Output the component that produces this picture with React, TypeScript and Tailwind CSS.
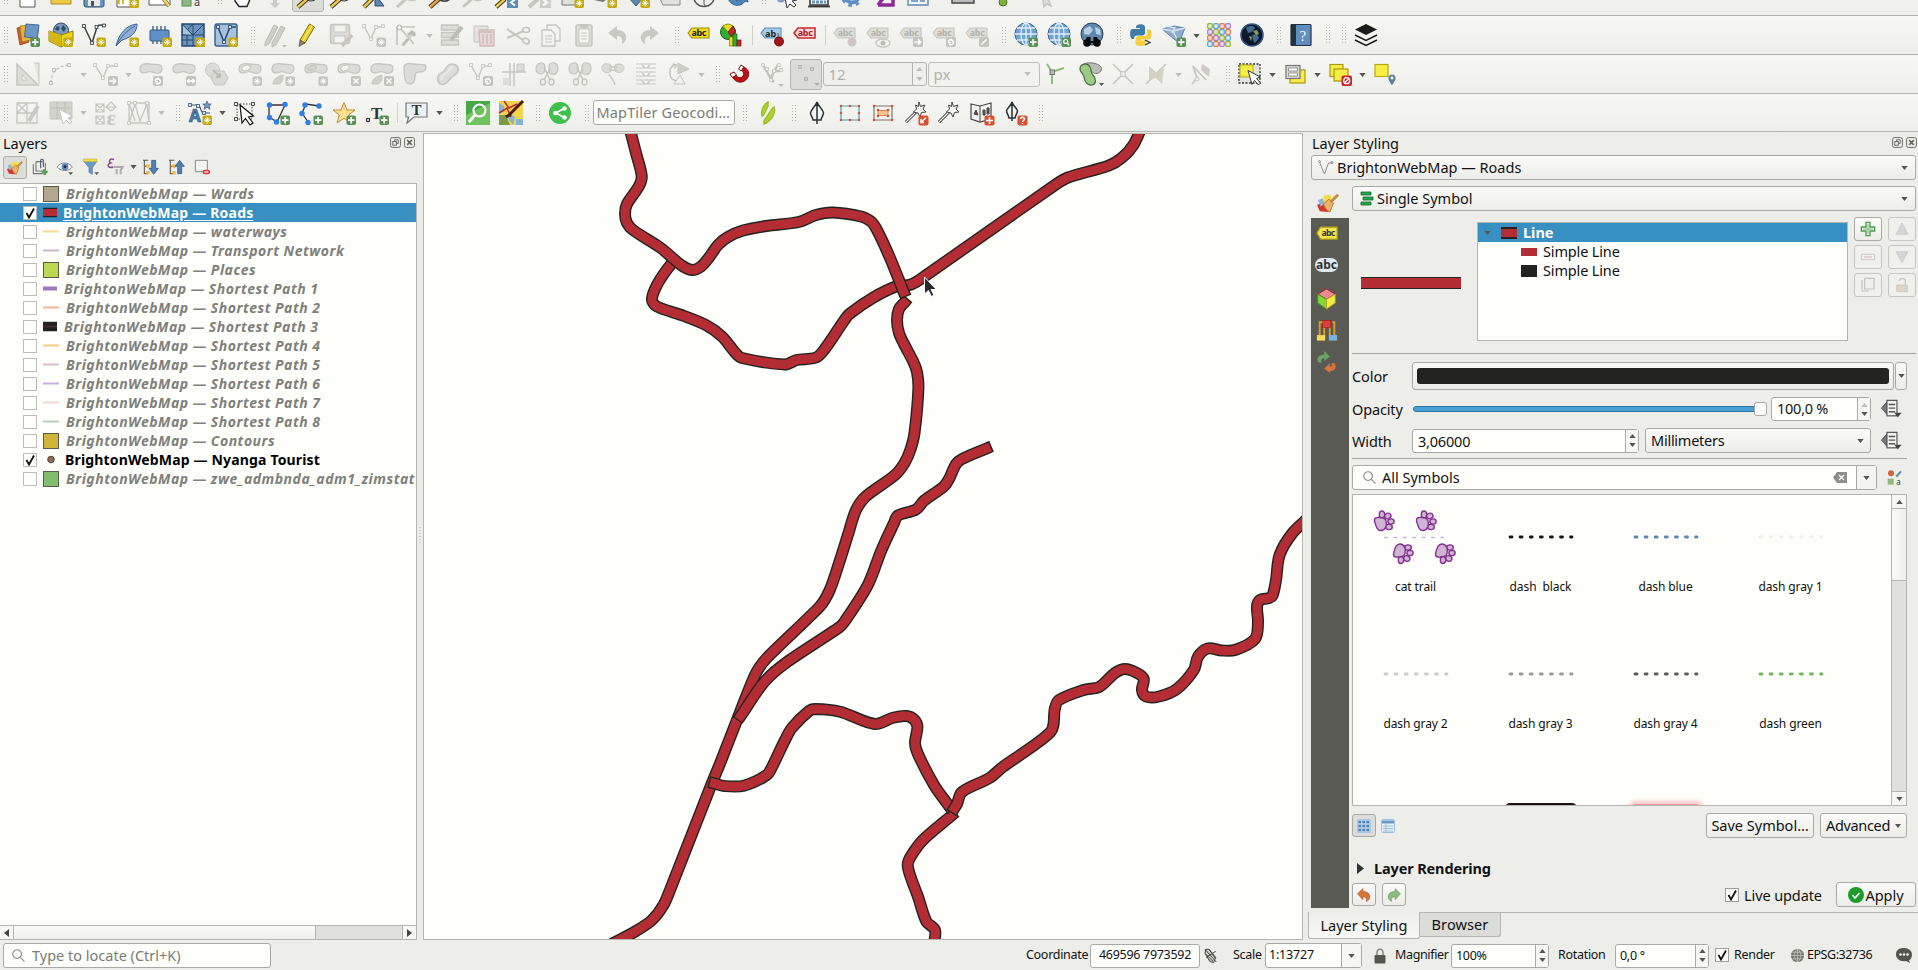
import React from "react";
import type { ReactNode } from "react";

/* ---------- shared drawing pieces ---------- */

const G = "#c6c6c1";
const GF = "#dcdcd8";

const Svg = ({ children, className = "h-6 w-6" }: { children: ReactNode; className?: string }) => (
  <svg viewBox="0 0 24 24" className={`${className} shrink-0 overflow-visible`} fill="none">
    {children}
  </svg>
);

const StarBadge = ({ c = "#c3aa12" }: { c?: string }) => (
  <g>
    <rect x="14.5" y="14.5" width="9.5" height="9.5" rx="1.8" fill={c} />
    <path d="M19.2 16v6.5M16 19.2h6.5M17 17l4.4 4.4M21.4 17L17 21.4" stroke="#fff" strokeWidth="1" />
  </g>
);
const PlusBadge = () => (
  <g>
    <rect x="14.5" y="14.5" width="9.5" height="9.5" rx="1.8" fill="#5a9058" />
    <path d="M19.2 16v6.5M16 19.2h6.5" stroke="#fff" strokeWidth="1.7" />
  </g>
);
const GrayBadge = ({ d }: { d: string }) => (
  <g>
    <rect x="14" y="14" width="10" height="10" rx="1.8" fill="#c4c4bf" />
    <path d={d} stroke="#fff" strokeWidth="1.5" fill="none" />
  </g>
);
const B_ARROW = "M15.5 19h6M19 16.3l2.7 2.7L19 21.7";
const B_SWAP = "M15.5 19h7M17.5 17l-2 2 2 2M20.5 17l2 2-2 2";
const B_ROT = "M17 21.5c4 1 5.500-2 3.500-4s-5 0-3.500 2.500l2-.5";
const B_X = "M16.500 16.500l5 5M21.500 16.500l-5 5";
const B_PEN = "M16.500 21.500l5-5";
const RedBadge = ({ d }: { d: string }) => (
  <g>
    <rect x="14.500" y="14.500" width="10" height="10" rx="2" fill="#d6512f" />
    <path d={d} stroke="#fff" strokeWidth="1.500" />
  </g>
);

const Nodes = ({ pts, s, f = "#f4f4f1" }: { pts: number[][]; s: string; f?: string }) => (
  <g>
    {pts.map(([x, y], i) => (
      <rect key={i} x={x - 1.4} y={y - 1.4} width="2.8" height="2.8" fill={f} stroke={s} strokeWidth=".9" />
    ))}
  </g>
);
const BLOB = "M1 7c0-5 5-6 10-5s12-1 12 4-4 6-7 5-4-2-7-1-8 2-8-3z";

/* ---------- toolbar icons ---------- */

const icons: Record<string, ReactNode> = {
  page: <path d="M4 -1h15v24H4z" fill="#fff" stroke="#555" />,
  folder: <path d="M2 6h20v13H2z" fill="#eec84a" stroke="#b08a1c" transform="translate(0,1)" />,
  disk: <g><rect x="2" y="2" width="20" height="21" rx="2" fill="#6d94bf" stroke="#2f4f74" /><path d="M6 14h12v8H6z" fill="#e8e8e8" /><path d="M9 17h3v5H9z" fill="#456" /></g>,
  layout: <g><path d="M2 2h16v21H2z" fill="#fff" stroke="#555" /><path d="M4 8v12M8 8v12" stroke="#d5c03b" strokeWidth="2" /><StarBadge /></g>,
  layoutEdit: <g><path d="M1 2h21v19H1z" fill="#fff" stroke="#555" /><path d="M12 10l9 12" stroke="#8a7a2a" strokeWidth="4" /><path d="M12 10l9 12" stroke="#ecd76a" strokeWidth="2.4" /></g>,
  styleMgr: <g><rect x="1" y="12" width="9" height="10" fill="#8fb684" stroke="#5e8a56" /><text x="13" y="22" fontSize="11" fill="#444" fontFamily="Noto Sans">a</text></g>,
  hand: <path d="M5 12v5l4 5.500h8l2.500-6V8l-3-2H8z" fill="#fff" stroke="#222" strokeWidth="1.400" />,
  pan: <path d="M12 24l-5-5h3v-8h4v8h3zM4 12l4 3v-6zM20 12l-4 3v-6z" fill="#c9cbce" />,
  zoom: <g><circle cx="15" cy="9" r="8" fill="#e6eef5" stroke="#333" /><path d="M11 15l-9 8" stroke="#3d3520" strokeWidth="4.500" /><path d="M10.500 15.500L2 23" stroke="#e9c84d" strokeWidth="2.500" /></g>,
  zoomB: <g><path d="M13 10l9 12h-9z" fill="#5f87b5" stroke="#2f4f74" /><path d="M11 14l-9 9" stroke="#3d3520" strokeWidth="4.500" /><path d="M10.500 14.500L2 23" stroke="#e9c84d" strokeWidth="2.500" /></g>,
  zoomG: <path d="M12 14l-10 9M12 14a8 8 0 0 0 10 0" stroke={G} strokeWidth="3" />,
  zoomO: <g><path d="M11 15a8 8 0 0 0 11 0" stroke="#333" strokeWidth="1.500" /><path d="M11 15l-9 8" stroke="#3d3520" strokeWidth="4.500" /><path d="M10.500 15.500L2 23" stroke="#e3a04d" strokeWidth="2.500" /></g>,
  zoomPrev: <g><path d="M11 15l-9 8" stroke="#3d3520" strokeWidth="4.500" /><path d="M10.500 15.500L2 23" stroke="#e9c84d" strokeWidth="2.500" /><rect x="13" y="13" width="11" height="11" fill="#5d8dbd" /><path d="M21 15.500l-4 3 4 3" stroke="#fff" strokeWidth="2" /></g>,
  zoomNext: <g><path d="M11 15l-9 8" stroke={G} strokeWidth="4" /><rect x="13" y="13" width="11" height="11" fill="#cfcfca" /><path d="M16 15.500l4 3-4 3" stroke="#fff" strokeWidth="2" /></g>,
  mapNew: <g><path d="M2 2h18v19H2z" fill="#dededb" stroke="#777" /><StarBadge /></g>,
  map3d: <g><path d="M1 15l9 2 9-8" stroke="#777" strokeWidth="2" fill="#ddd" /><StarBadge /></g>,
  bookmark: <g><path d="M2 13l8 9 8-9z" fill="#5f87b5" stroke="#3a5a80" /><StarBadge /></g>,
  scroll: <path d="M2 2h19v19H4l-2-4z" fill="#e2e2df" stroke="#888" />,
  clock: <g><circle cx="12" cy="12" r="10.500" fill="#f1f1ef" stroke="#555" strokeWidth="1.500" /><path d="M12 12v8M12 20l1 2" stroke="#555" /></g>,
  refresh: <path d="M3 14c2 8 13 10 17 3l3 1-2-8-6 4 2 1c-3 3-7 2-9-3z" fill="#4f87ba" stroke="#2f5f8a" />,
  identify: <g><circle cx="7" cy="14" r="4.500" fill="#7f9fc0" /><path d="M10 9l3 15 3-4 4 3 2-2-4-4 5-1z" fill="#fff" stroke="#333" /></g>,
  abacus: <g><path d="M3 4h18v17H3z" stroke="#333" strokeWidth="1.500" fill="#f5f5f3" /><path d="M5 18h14" stroke="#6d94bf" strokeWidth="3" strokeDasharray="3 1" /><path d="M1 22.500h22" stroke="#333" strokeWidth="1.800" /></g>,
  gear: <g><circle cx="12" cy="12" r="6.500" stroke="#5c8fc6" strokeWidth="4" /><circle cx="12" cy="12" r="9.500" stroke="#5c8fc6" strokeWidth="3" strokeDasharray="3.500 4" /></g>,
  sigma: <path d="M5 21h15v-6M5 21l7-9" stroke="#8d2a96" strokeWidth="3.500" />,
  table: <g><path d="M2 2h20v19H2z" fill="#eff4fa" stroke="#5f87b5" strokeWidth="1.400" /><path d="M5 17h7M14 17h5" stroke="#5f87b5" strokeWidth="1.600" /></g>,
  ruler: <g><path d="M1 12h22v7H1z" fill="#bbb" stroke="#444" strokeWidth="1.400" /><path d="M8 12v4M13 12v4M18 12v4" stroke="#444" /></g>,
  tips: <g><circle cx="7" cy="18" r="4" fill="#7fb03e" stroke="#4d7a20" /><path d="M8 14l5-8" stroke="#e3cf39" strokeWidth="5" /></g>,
  actionsG: <path d="M4 16a5 5 0 0 1 9-2M13 10l2 13 3-3 4 2-2-5z" stroke={G} strokeWidth="1.500" fill={GF} />,

  addLayer: <g><path d="M1 5l9-2 3 16-9 3z" fill="#cf5b28" stroke="#9c3f16" strokeWidth=".8" /><path d="M4 3l9-1 2 15-9 2z" fill="#e0b53a" stroke="#a07a18" strokeWidth=".8" /><path d="M10 1l13 1-1.500 13-13-1z" fill="#6e97c3" stroke="#3a618d" strokeWidth=".9" /><PlusBadge /></g>,
  pkg: <g><circle cx="12" cy="7.500" r="7.500" fill="#7c9cbc" stroke="#2f4a68" /><path d="M8 3c3 0 3 3 1 5l-3-2zM14 2l3 3-2 4-3-3z" fill="#2f4a68" /><path d="M0 8l12 4 12-4v10l-12 6-12-6z" fill="#ecd41b" stroke="#8f7d0c" /><path d="M12 12v12" stroke="#8f7d0c" /><path d="M0 8l12 4v12l-12-6z" fill="#d3b713" /><StarBadge /></g>,
  vnew: <g><path d="M2 3l8 17 5-16c2-3 5-2 7-1" stroke="#3c4248" strokeWidth="1.500" /><Nodes pts={[[2, 3], [10, 20], [14.500, 4], [22, 2.500]]} s="#3c4248" /><StarBadge /></g>,
  feather: <g><path d="M1 23C4 10 12 2 22 1c0 7-4 13-15 16z" fill="#8fb0d3" stroke="#3c6390" /><path d="M1 23C6 13 13 7 20 3" stroke="#3c6390" /><StarBadge /></g>,
  chip: <g><path d="M5 3v18M9 3v18M13 3v18M17 3v18" stroke="#2f4f74" strokeWidth="1.200" /><rect x="2" y="7" width="19" height="11" rx="1" fill="#5f8fc4" stroke="#335e8f" /><StarBadge /></g>,
  mesh: <g><path d="M1 1h22v22H1z" fill="#6c94bf" stroke="#27486e" strokeWidth="1.500" /><path d="M1 12h22M12 1v22M1 1l11 11M12 1L1 12M12 12l11-11M6 12v11M1 17h11" stroke="#27486e" /><path d="M2 2.500l8.500 9L2 11z" fill="#a9c3df" /><StarBadge /></g>,
  vgrid: <g><rect x="1" y="1" width="22" height="22" rx="2" fill="#a9c1dd" stroke="#3c6390" strokeWidth="1.500" /><path d="M4 4l6 15 6-15h6" stroke="#27486e" strokeWidth="1.500" /><Nodes pts={[[4, 4], [10, 19], [16, 4]]} s="#27486e" /><StarBadge /></g>,

  pencils: <g><path d="M2 20L11 2l4 2-9 17-4 2zM9 20l9-17 4 2-9 17-4 2z" fill="#cfcfca" stroke="#bcbcb7" /><path d="M19 22h5l-2.500 2.500z" fill="#bdbdb8" /></g>,
  pencil: <g><path d="M4 17L13.500 1l5 3L9 20z" fill="#e6d11f" stroke="#7c7012" strokeWidth="1" /><path d="M6.500 18.500L16 2.500" stroke="#f6ec86" strokeWidth="1.200" /><path d="M4 17l5 3-6 3.500z" fill="#8b8268" stroke="#5a553f" strokeWidth=".7" /></g>,
  diskG: <g><rect x="1.500" y="1.500" width="19" height="19" rx="2" fill={GF} stroke={G} strokeWidth="1.500" /><path d="M5 2h12v7H5zM5 13h11v7H5z" fill="#f3f3f0" stroke={G} /><path d="M23 12L13 23" stroke="#c9c5bb" strokeWidth="3.500" /></g>,
  vstarG: <g><path d="M2 3l7 13 5-12h7" stroke={G} strokeWidth="1.400" /><Nodes pts={[[2, 3], [9, 16], [14, 4], [21, 3]]} s={G} /><StarBadge c="#c4c4bf" /></g>,
  vertexG: <g><path d="M2 22V4h18M5 5l14 16M20 9l-13 14" stroke={G} strokeWidth="1.700" /><path d="M8 22l5-6M13 12l4-3 3 4" stroke="#bdbdb8" strokeWidth="3" /><circle cx="4.500" cy="4.500" r="2.500" stroke="#b0b0ab" fill="#f4f4f1" /></g>,
  formG: <g><path d="M1.500 2h17v5h-17zM1.500 9.500h17v5h-17zM1.500 17h17v5h-17z" fill={GF} stroke={G} strokeWidth="1.300" /><path d="M22 4L11 17" stroke="#bdbdb8" strokeWidth="4" /></g>,
  trashG: <g><path d="M1 3h14v16H1z" fill="#e4e2df" stroke={G} /><path d="M6 9h15v14H7z" fill="#ead9d9" stroke="#cfb9b9" strokeWidth="1.300" /><path d="M5 7h17M10 11v10M14 11v10M18 11v10" stroke="#cfb9b9" strokeWidth="1.500" /></g>,
  cut: <g><path d="M1 6l16 11M1 15L18 8" stroke={G} strokeWidth="2" /><ellipse cx="20" cy="7" rx="3.500" ry="2.500" stroke={G} strokeWidth="1.600" /><ellipse cx="20" cy="18" rx="3.500" ry="2.500" stroke={G} strokeWidth="1.600" transform="rotate(30 20 18)" /></g>,
  copy: <g><path d="M8 2h9l4 4v12H8z" fill="#f3f3f0" stroke={G} strokeWidth="1.300" /><path d="M3 7h9l4 4v12H3z" fill="#f3f3f0" stroke={G} strokeWidth="1.300" /><path d="M6 13h7M6 16h7M6 19h7" stroke={G} /></g>,
  paste: <g><rect x="4" y="2" width="16" height="21" rx="1.500" fill={GF} stroke={G} strokeWidth="1.500" /><path d="M7 6h10v14H7z" fill="#f6f6f3" stroke={G} /><path d="M9 10h6M9 13h6M9 16h6" stroke={G} /><rect x="8" y="1" width="8" height="4" fill={G} /></g>,
  undoG: <path d="M3 10l9-7v4c8 0 10 6 9 9-1 4-4 5-4 5s2-8-5-8v4z" fill="#c9c9c4" />,
  redoG: <path d="M21 10l-9-7v4c-8 0-10 6-9 9 1 4 4 5 4 5s-2-8 5-8v4z" fill="#c9c9c4" />,
  tagY: <g><path d="M1 10l4-5h17v10H5z" fill="#f2dc1e" stroke="#9a8a0c" strokeWidth="1.100" /><text x="4.500" y="13.200" fontSize="9" fontWeight="700" fill="#222" fontFamily="Noto Sans" textLength="15">abc</text></g>,
  diagram: <g><circle cx="8" cy="9" r="7.500" fill="#2fae36" stroke="#1b5c1e" /><path d="M8 9L3 3a8 8 0 0 1 10 0z" fill="#f2dc1e" stroke="#8a7b0a" strokeWidth=".7" /><path d="M8 9l5-6 2.500 5L11 14z" fill="#c1272d" stroke="#6b1216" strokeWidth=".7" /><rect x="9.500" y="14" width="3.500" height="9" fill="#f2dc1e" stroke="#8a7b0a" strokeWidth=".7" /><rect x="13" y="11" width="4" height="12" fill="#2fae36" stroke="#1b5c1e" strokeWidth=".7" /><rect x="17" y="17" width="4" height="6" fill="#c1272d" stroke="#6b1216" strokeWidth=".7" /></g>,
  tagPin: <g><path d="M1 10l4-5h16v10H5z" fill="#a8cbe9" stroke="#5c8cb8" strokeWidth="1.100" /><text x="5" y="13.500" fontSize="9" fontWeight="700" fill="#222" fontFamily="Noto Sans">ab</text><path d="M18 10v7" stroke="#888" strokeWidth="2" /><circle cx="19" cy="18.500" r="4.500" fill="#a3151a" stroke="#6b0f12" /></g>,
  tagR: <g><path d="M1 10l4-5h17v10H5z" fill="#f6dcdc" stroke="#cc2229" strokeWidth="1.500" /><text x="4.800" y="13.200" fontSize="9" fontWeight="700" fill="#b3161c" fontFamily="Noto Sans" textLength="15">abc</text></g>,
  tagPinG: <TagG><circle cx="19" cy="19" r="4.500" fill="#cfc7c7" /></TagG>,
  tagEye: <TagG><ellipse cx="17" cy="20" rx="7" ry="4" fill="#f3f3f0" stroke={G} strokeWidth="1.300" /><circle cx="17" cy="20" r="2.500" fill="#bdbdb8" /></TagG>,
  tagMove: <TagG><GrayBadge d={B_ARROW} /></TagG>,
  tagRot: <TagG><GrayBadge d={B_ROT} /></TagG>,
  tagEdit: <TagG><GrayBadge d={B_PEN} /></TagG>,
  globeP: <g><Globe /><PlusBadge /></g>,
  globeS: <g><Globe /><rect x="14.500" y="14.500" width="9.500" height="9.500" rx="1.800" fill="#5a9058" /><circle cx="18.700" cy="18.500" r="2" stroke="#fff" strokeWidth="1.200" /><path d="M20.200 20.200l2 2" stroke="#fff" strokeWidth="1.300" /></g>,
  globeB: <g><circle cx="12" cy="11" r="11" fill="#5f86ad" stroke="#2a4059" /><path d="M4 6l6-3 3 4-4 5-5-1zM15 4l5 2 1 6-5-1z" fill="#b7cde2" /><circle cx="7" cy="20" r="3.800" fill="#0a0a0a" /><circle cx="17" cy="20" r="3.800" fill="#0a0a0a" /><path d="M7 14h3.500v4h3v-4H17l3 6h-5l-3 0-3 0H4z" fill="#0a0a0a" /></g>,
  python: <g><path d="M8 2c5-2 9 0 8 4v4c0 2-2 2.500-3 2.500H8c-2 0-3 1-3 3.500H3c-2-1-3-9 0-10h8V5H7c0-1 0-2 1-3z" fill="#3e7ca8" /><path d="M18 6.500h3c2 1 2.500 9-1 10h-8v1h5c1 4-2 5.500-5 5.500-4 0-6-1-5.500-4v-3c0-2 1.500-3 3-3H15c2 0 3-1.500 3-3.500z" fill="#f7cf41" /><path d="M16 17l5 2.500-5 2.500" stroke="#333" strokeWidth="1.300" /></g>,
  cube: <g><path d="M0 6l12-3 11 2-6 15-5-4z" fill="#8dadcf" stroke="#4a6f99" strokeWidth=".8" /><path d="M0 6l11 2 12-3M11 8l6 12M3 3l10 2-3 5" stroke="#dce7f2" strokeWidth="1.300" /><PlusBadge /></g>,
  swatches: (
    <g>
      {[0, 1, 2, 3].map((r) => [0, 1, 2, 3].map((c) => (
        <rect key={`${r}${c}`} x={c * 6 + 0.7} y={r * 6 + 0.7} width="4.600" height="4.600" rx="1" strokeWidth="1.300"
          fill={["#e3edc9", "#d7eaf7", "#fbe0d6", "#eadcf2"][(r * 3 + c) % 4]} stroke={["#9ab83e", "#64a8d6", "#e47a56", "#a783c3"][(c + r * 3) % 4]} />
      )))}
    </g>
  ),
  earth: <g><circle cx="12" cy="12" r="11" fill="#10182c" stroke="#33517e" strokeWidth="1.500" /><path d="M6 5c4-3 8-2 9 0l-3 4-4 1zM12 12l5-1 2 4-4 5-2-3z" fill="#3f6d8e" /><path d="M13 8l4-1 2 4-3 1zM9 13l3 1-1 4z" fill="#8f9a5b" /></g>,
  help: <g><rect x="2" y="1.500" width="20" height="21" rx="1" fill="#5f8dbd" stroke="#22303f" strokeWidth="1.200" /><path d="M2 1.500h5v21H2z" fill="#22303f" /><text x="10.500" y="18" fontSize="15" fill="#fff" fontFamily="Liberation Serif">?</text></g>,
  layers: <g><path d="M12 1l11 5.500-11 5.500L1 6.500z" fill="#1b1b1b" /><path d="M1 12l11 5.500L23 12M1 17l11 5.500L23 17" stroke="#1b1b1b" strokeWidth="1.500" /></g>,

  setSq: <g><path d="M1 2v21h21z" fill={GF} stroke={G} strokeWidth="1.500" /><path d="M6 13v5h5z" fill="#f4f4f1" stroke={G} /><path d="M18 1h5v21" stroke={G} fill="#e8e5dd" /></g>,
  arcG: <g><path d="M2 21c0-9 5-17 18-18" stroke={G} strokeWidth="1.400" strokeDasharray="3 2" /><Nodes pts={[[2, 21], [5, 8], [20, 3]]} s="#b7b7b2" /></g>,
  vArrow: <g><path d="M1 3l8 13 5-12h8" stroke={G} strokeWidth="1.400" /><Nodes pts={[[1, 3], [9, 16], [14, 4], [22, 3]]} s={G} /><GrayBadge d={B_ARROW} /></g>,
  bRot: <Blob><GrayBadge d={B_ROT} /></Blob>,
  bSwap: <Blob><GrayBadge d={B_SWAP} /></Blob>,
  bHex: <g><circle cx="7.500" cy="8" r="7" fill={GF} stroke={G} /><path d="M10 9h9l4 7-4 7h-9l-4-7z" fill="#dadad6" stroke={G} /><path d="M8 8l7 7M15 11v4h-4" stroke="#b5b5b0" strokeWidth="1.600" /></g>,
  bRing: <Blob hole><StarBadge c="#c4c4bf" /></Blob>,
  bPart: <Blob part><StarBadge c="#c4c4bf" /></Blob>,
  bFill: <Blob hole inner><StarBadge c="#c4c4bf" /></Blob>,
  bRingX: <Blob hole><GrayBadge d={B_X} /></Blob>,
  bPartX: <Blob part><GrayBadge d={B_X} /></Blob>,
  bShape: <path d="M1 6c0-5 5-5 10-4s12-1 12 3-4 5-7 5-4 1-4 5-2 7-6 7-5-9-5-16z" fill={GF} stroke={G} strokeWidth="1.300" />,
  bCurve: <g><path d="M2 19c-2-6 2-7 5-9s3-8 9-8 8 6 5 9-6 4-8 7-8 8-11 1z" fill={GF} stroke={G} strokeWidth="1.500" /><path d="M5 18c0-4 3-5 6-8s3-4 6-5" stroke="#e8e8e5" strokeWidth="2" /></g>,
  vRefresh: <g><path d="M2 3l7 13 5-12h7" stroke={G} strokeWidth="1.400" /><Nodes pts={[[2, 3], [9, 16], [14, 4], [21, 3]]} s={G} /><GrayBadge d={B_ROT} /></g>,
  trim: <g><path d="M8 1v23M12 1v23M0 10h24" stroke={G} strokeWidth="1.500" /><rect x="15" y="2" width="7" height="7" fill={GF} stroke={G} /><rect x="1" y="16" width="7" height="7" fill={GF} /></g>,
  scis: <Scissor />,
  scis2: <Scissor />,
  merge: <g><path d="M1 6c0-5 5-5 9-3v6c-3 3-9 2-9-3zM14 3c4-2 9-1 9 3s-5 6-9 3z" fill={GF} stroke={G} /><path d="M8 5h8M8 8h8M8 12c2 4 5 6 6 11" stroke={G} strokeWidth="1.500" /></g>,
  align: <path d="M2 2h20M2 6h20M2 10h20M2 14h20M2 18h20M2 22h20M8 3l3 3M16 3l-3 3M8 11l3 3M16 11l-3 3M8 19l3 3M16 19l-3 3" stroke={G} strokeWidth="1.200" />,
  rotG: <g><path d="M9 19C1 17 1 5 8 3M5.500 2l4 1-2 3.500" stroke={G} strokeWidth="1.500" /><path d="M11 1l11 6-11 5z" fill="#d0d0cb" stroke={G} /><path d="M7 22l6-9 5 9z" stroke={G} fill="#f2f2ef" /></g>,
  magnet: <g><path d="M4 14c3 8 13 8 16 1 2-6-1-8-4-10l-3 3c3 2 3 4 2 6s-5 3-7-1z" fill="#c00d12" stroke="#7c0a0d" /><path d="M13 3l3 2-3 4-2.500-2zM2 12l4-2 2.500 3-4 2.500z" fill="#fff" stroke="#7c0a0d" /></g>,
  vG: <g><path d="M2 3l8 14 3-8 4-6M13 9l6 0M10 17l3 3" stroke={G} strokeWidth="2.600" /><Nodes pts={[[2, 3], [6, 7], [13, 9], [18, 3], [20, 8], [10, 18]]} s={G} /><path d="M17 22h6l-3 3z" fill="#bdbdb8" /></g>,
  dotsG: <g><Nodes pts={[[6, 5], [18, 7], [12, 17]]} s="#aeaea9" f="#cfcfca" /><path d="M20 21h6l-3 3z" fill="#b0b0ab" /></g>,
  trace: <g><path d="M2 2l5 8 12-4M7 10v12" stroke="#8fbd80" strokeWidth="2" /><rect x="5" y="8" width="4.500" height="4.500" fill="#b9b9b4" stroke="#777" /></g>,
  blobs: <g><path d="M4 3c4-4 17-2 19 2s-3 8-7 6z" fill="#bcbcb7" stroke="#777" /><path d="M2 7C2 1 10 1 12 5s0 5 3 8 4 9-1 10-7-3-8-8-4-4-4-8z" fill="#9ccb86" stroke="#44693a" strokeWidth="1.200" /><path d="M21 21h5l-2.500 3z" fill="#555" /></g>,
  crossG: <g><path d="M2 2l20 20M22 2L2 22" stroke={G} strokeWidth="1.700" /><circle cx="12" cy="12" r="2.500" fill="#eee" stroke={G} /></g>,
  boltG: <g><path d="M2 22L22 2" stroke={G} strokeWidth="1.700" /><path d="M5 4l8 7 7-5-2 16-6-6-7 2z" fill="#d3d0c8" /></g>,
  selfG: <g><path d="M3 22l5-6M8 16L4 4l13 14" stroke={G} strokeWidth="1.700" /><path d="M13 2l8 5-1 8-8-7z" fill="#cfcac5" /><circle cx="8" cy="17" r="2" fill="#eee" stroke={G} /></g>,
  selRect: <g><rect x="1" y="2" width="21" height="19" stroke="#333" strokeWidth="1.300" strokeDasharray="2 1.500" fill="#e2e2de" /><rect x="2" y="3" width="13" height="12" fill="#f7ee45" stroke="#b8a913" /><path d="M10 8.500l4 14 2.500-4 4 4.500 2-2-4-4.500 4-1.500z" fill="#fff" stroke="#333" /></g>,
  selForm: <g><rect x="7" y="8" width="15" height="13" fill="#f7ee45" stroke="#a99a10" strokeWidth="1.200" /><rect x="3" y="3.500" width="14" height="13" fill="#d8d8d5" stroke="#777" strokeWidth="1.200" /><path d="M5.500 6h9v3h-9zM5.500 11h9v3h-9z" fill="#fff" stroke="#777" strokeWidth=".7" /></g>,
  desel: <g><rect x="2" y="2.500" width="13" height="12" fill="#f7ee45" stroke="#a99a10" strokeWidth="1.200" /><rect x="6" y="7" width="14" height="12" fill="#f7ee45" stroke="#a99a10" strokeWidth="1.200" /><rect x="13.500" y="13.500" width="10.500" height="10.500" rx="2" fill="#c9232c" /><circle cx="18.700" cy="18.700" r="3" stroke="#fff" strokeWidth="1.300" /><path d="M16.700 20.700l4-4" stroke="#fff" strokeWidth="1.300" /></g>,
  selPin: <g><rect x="2" y="2.500" width="13" height="12" fill="#f7ee45" stroke="#b8a913" strokeWidth="1.200" /><path d="M19 12.500a3.600 3.600 0 0 1 3.600 3.800c0 2.500-3.600 7-3.600 7s-3.600-4.500-3.600-7A3.600 3.600 0 0 1 19 12.500z" fill="#5f7f9f" /><circle cx="19" cy="16" r="1.400" fill="#fff" /></g>,

  gridPen: <g><path d="M1 2h20v20H1zM1 12h20M11 2v20M1 2l10 10M11 2L1 12" stroke={G} strokeWidth="1.300" /><path d="M22 5L13 20" stroke="#c9c9c4" strokeWidth="4" /></g>,
  gridSel: <g><path d="M1 1h22v17H1z" fill="#d3d3cd" stroke={G} /><path d="M1 7h22M8 1v17M16 1v17" stroke="#bdbdb6" /><path d="M10 8l4 15 3-4 4 4 2-2-4-4 4-2z" fill="#fff" stroke={G} /></g>,
  gridE: <g><path d="M2 3h8v8H2zM2 3l8 8M10 3l-8 8M2 15h8v8H2zM2 15l8 8M10 15l-8 8M17 1l5 5-5 4-5-4zM12 6h10" stroke={G} strokeWidth="1.200" /><text x="12.500" y="23.500" fontSize="22" fontWeight="700" fill="#c4c4bf" fontFamily="Liberation Serif">ε</text></g>,
  gridN: <g><path d="M2 2h20v20H2zM2 22L8 3l5 17 7-17 2 19M2 2l6 18" stroke={G} strokeWidth="1.300" /><Nodes pts={[[2, 2], [8, 2], [20, 2], [2, 22], [22, 22]]} s={G} /></g>,
  textA: <g><path d="M2 4h8c3 0 2 8 6 8h6" stroke="#33557c" strokeWidth="1.200" /><Nodes pts={[[2, 4], [10, 5], [16, 12]]} s="#33557c" /><text x="1" y="20.500" fontSize="17" fontWeight="700" fill="#4d7cab" stroke="#27486e" strokeWidth=".6" fontFamily="Noto Sans">A</text><path d="M19 0l1.300 3h3l-2.300 2 1 3.300-3-2-3 2 1-3.300-2.300-2h3z" fill="#6f9ac6" stroke="#27486e" strokeWidth=".6" /><StarBadge /></g>,
  cursorSel: <g><rect x="4" y="3" width="15" height="15" stroke="#444" strokeDasharray="1.500 1.500" /><Nodes pts={[[3, 3], [20, 3], [3, 18]]} s="#333" f="#fff" /><path d="M7 4l2 18 3.500-4.500L17 24l3-2-4.500-6 5-1z" fill="#fff" stroke="#111" strokeWidth="1.200" /></g>,
  polyP: <g><path d="M3 4h16l-8 17L3 16z" stroke="#333" strokeWidth="1.300" fill="none" /><BDots pts={[[3.500, 4], [19, 3.500], [3.500, 16.500], [10.500, 21]]} /><PlusBadge /></g>,
  lineP: <g><path d="M20 5L7 3 3 12l6 9" stroke="#333" strokeWidth="1.300" /><BDots pts={[[20, 5], [6, 4], [3, 12.500], [9, 21.500]]} /><PlusBadge /></g>,
  starP: <g><path d="M12 1.500l3 7.500h8l-6.300 5 2.300 8-7-4.700L5 22l2.300-8L1 9h8z" fill="#f9df8e" stroke="#c88a3c" /><PlusBadge /></g>,
  textP: <g><text x="6" y="18" fontSize="17" fontWeight="700" fill="#333" fontFamily="Liberation Serif">T</text><rect x="1.500" y="17.500" width="3" height="3" stroke="#333" fill="#ccc" /><PlusBadge /></g>,
  textBub: <g><path d="M1 2h21v14H9l-7 6 1.500-6H1z" fill="#eaf2f8" stroke="#777" strokeWidth="1.200" /><text x="6.500" y="14" fontSize="15" fontWeight="700" fill="#333" fontFamily="Liberation Serif">T</text></g>,
  searchG: <g><rect x="0" y="0" width="24" height="24" fill="#45a845" /><path d="M0 14L24 2v22H0z" fill="#6fc25c" /><circle cx="13.500" cy="9.500" r="6" stroke="#fff" strokeWidth="2.200" /><path d="M9 14l-6 7" stroke="#fff" strokeWidth="3" /></g>,
  osm: <g><rect x="0" y="0" width="24" height="24" fill="#f2d54c" /><path d="M0 14h7l4 10H0z" fill="#7a9a4c" /><path d="M0 2l5 3v6l-5 2zM10 12l6 4-2 8-6-8zM17 18h7v6h-7z" fill="#87b2d8" /><path d="M5 0l5 7 8-4M0 12l8-5 4 9" stroke="#c1272d" strokeWidth="1.500" /><path d="M24 0L10 14M7 16l5-3" stroke="#4a1c16" strokeWidth="3" /></g>,
  share: <g><circle cx="12" cy="12" r="11" fill="#3fbf4b" /><path d="M16 7.500L8 12l8 4.500" stroke="#fff" strokeWidth="1.600" /><circle cx="16.500" cy="7.500" r="2.300" fill="#fff" /><circle cx="7.500" cy="12" r="2.300" fill="#fff" /><circle cx="16.500" cy="16.500" r="2.300" fill="#fff" /></g>,
  slashes: <g><path d="M6 15c-1-5 1-11 6-14v4L7.500 14zM8 20l8-12 2-2c2 6-2 13-10 17z" fill="#b7d32b" stroke="#9cbf25" strokeWidth="1.500" /></g>,
  nib: <path d="M12 1v22M12 1c-1 4-6 7-6.500 11 0 2 2 4 2.500 7h8c.5-3 2.500-5 2.500-7C18 8 13 5 12 1z" stroke="#2b3036" strokeWidth="1.500" />,
  rectO: <g><path d="M3 5h18v14H3z" stroke="#3fa8b8" strokeWidth="1.200" /><RDots pts={[[3, 5], [12, 5], [21, 5], [3, 19], [12, 19], [21, 19], [3, 12], [21, 12]]} /></g>,
  rectI: <g><path d="M3 5h18v14H3z" stroke="#777" strokeWidth="1.200" /><path d="M7 9.500h10v5H7z" fill="#f3c68d" stroke="#d6713f" strokeWidth=".8" /><RDots pts={[[3, 5], [21, 5], [3, 19], [21, 19], [7, 9], [17, 9], [7, 15], [17, 15]]} /></g>,
  wandR: <g><Wand /><RedBadge d="M17 21.500l5-5M17 18v3.500h3" /></g>,
  wand: <Wand />,
  bookR: <g><path d="M1 3l9 2 11-3v16l-11 3-9-3z" fill="#f1f1ef" stroke="#444" strokeWidth="1.200" /><path d="M10 5v15M4 13l2-4 2 5zM13 9h2v5h-2zM17 7h2v6h-2z" stroke="#444" fill="#555" /><RedBadge d="M19.500 16v7M16 19.500h7" /></g>,
  nibR: <g><path d="M9 1v19M9 1c-1 4-5 6-5.500 9 0 2 2 4 2.500 7h6c.5-3 2.500-5 2.500-7C14 7 10 5 9 1z" stroke="#2b3036" strokeWidth="1.500" /><RedBadge d="M17.500 18c0-2.500 4-2.500 4 0 0 1.500-2 1.500-2 3M19.500 22v1" /></g>,
};

function TagG({ children }: { children: ReactNode }) {
  return (
    <g>
      <path d="M1 10l4-5h17v10H5z" fill="#deded8" stroke="#c6c6c0" strokeWidth="1.100" />
      <text x="4.800" y="13.200" fontSize="9" fontWeight="700" fill="#b2b2ad" fontFamily="Noto Sans" textLength="15">abc</text>
      {children}
    </g>
  );
}
function Globe() {
  return (
    <g>
      <circle cx="12" cy="11" r="11" fill="#6fa3d4" stroke="#35618f" />
      <ellipse cx="12" cy="11" rx="5" ry="11" stroke="#e3eef8" strokeWidth="1.300" />
      <path d="M12 0v22M1 11h22M3 5h18M3 17h18" stroke="#e3eef8" strokeWidth="1.300" />
    </g>
  );
}
function Blob({ children, hole, inner, part }: { children: ReactNode; hole?: boolean; inner?: boolean; part?: boolean }) {
  return (
    <g>
      <path d={BLOB} fill={GF} stroke={G} strokeWidth="1.300" />
      {hole && <ellipse cx="8" cy="6" rx="4.500" ry="2.600" fill={inner ? "#d2d2cd" : "#f6f6f3"} stroke={G} transform="rotate(-15 8 6)" />}
      {part && <path d="M2 22c0-5 5-8 10-9 0 5-1 9-5 9z" fill="#d2d2cd" stroke={G} />}
      {children}
    </g>
  );
}
function Scissor() {
  return (
    <g>
      <path d="M1 7c0-7 8-8 9-3 0 4 0 7-3 8-3 0-6-1-6-5zM14 4c1-5 9-4 9 2s-4 7-7 6-2-4-2-8z" fill={GF} stroke={G} strokeWidth="1.200" />
      <path d="M9 5l6 13M15 7L9 18" stroke={G} strokeWidth="1.500" />
      <ellipse cx="8" cy="20" rx="2.500" ry="3" stroke={G} strokeWidth="1.400" />
      <ellipse cx="16.500" cy="20" rx="2.500" ry="3" stroke={G} strokeWidth="1.400" />
    </g>
  );
}
function BDots({ pts }: { pts: number[][] }) {
  return <g>{pts.map(([x, y], i) => <circle key={i} cx={x} cy={y} r="2.700" fill="#2f7de8" />)}</g>;
}
function RDots({ pts }: { pts: number[][] }) {
  return <g>{pts.map(([x, y], i) => <rect key={i} x={x - 1.1} y={y - 1.1} width="2.200" height="2.200" fill="#d6512f" />)}</g>;
}
function Wand() {
  return (
    <g>
      <path d="M2 21L12 11" stroke="#333" strokeWidth="3" />
      <path d="M2 21L12 11" stroke="#fff" strokeWidth="1.200" />
      <path d="M15 1l1.500 4.500L21 4l-2 4 3 3-4.500.5L16 16l-2-4-4.500-1 3-3-1-4 3 1.500z" fill="#f4f4f1" stroke="#444" />
    </g>
  );
}

/* ---------- toolbar cells ---------- */

const Handle = ({ className = "w-4" }: { className?: string }) => (
  <div className={`flex shrink-0 items-center justify-end pr-[3px] ${className}`}>
    <svg viewBox="0 0 6 18" className="h-[18px] w-1.5">
      <path d="M1.500 1v17M4.500 1v17" stroke="#b3b4af" strokeWidth="1" strokeDasharray="1 2" />
    </svg>
  </div>
);
const Tri = ({ dim, up, small }: { dim?: boolean; up?: boolean; small?: boolean }) => (
  <svg viewBox="0 0 8 5" className={`${small ? "h-1 w-[7px]" : "h-[5px] w-2"} shrink-0`}>
    <path d={up ? "M0 5h8L4 0z" : "M0 0h8L4 5z"} fill={dim ? "#bcbdb8" : "#55564f"} />
  </svg>
);
const Drop = ({ dim }: { dim?: boolean }) => (
  <div className="flex w-3 shrink-0 items-center justify-center pt-px"><Tri dim={dim} small /></div>
);
const Sep = () => <div className="flex w-[7px] shrink-0 justify-center"><div className="my-auto h-5 w-px bg-[#cfd0cb]" /></div>;

const Bar = ({ items, className = "h-[39px]" }: { items: string; className?: string }) => (
  <div className={`flex shrink-0 border-b border-[#b4b5b0] bg-gradient-to-b from-[#f7f7f5] to-[#eeeeea] ${className}`}>
    <Cells items={items} />
  </div>
);
const Cells = ({ items }: { items: string }) => (
  <>
    {items.split(" ").map((n, i) => {
      if (n === "^") return <Handle key={i} className="w-[11.500px]" />;
      if (n === "|") return <Handle key={i} />;
      if (n === "v") return <Drop key={i} />;
      if (n === "d") return <Drop key={i} dim />;
      if (n === "/") return <Sep key={i} />;
      if (n === "SPIN")
        return (
          <div key={i} className="my-auto mr-px flex h-6 w-[104px] shrink-0 rounded-[3px] border border-[#b4b5b0] bg-[#efefec] text-[15px] text-[#b0b1ac]">
            <span className="flex-1 pl-[5px] leading-[23px]">12</span>
            <span className="flex w-3.5 flex-col items-center justify-center gap-1.5 border-l border-[#b4b5b0]"><Tri dim up small /><Tri dim small /></span>
          </div>
        );
      if (n === "COMBO")
        return (
          <div key={i} className="my-auto mr-px flex h-[25px] w-[112px] shrink-0 items-center justify-between rounded-[3px] border border-[#bfc0bb] bg-[#f2f2ef] pl-[5px] pr-2 text-[15px] text-[#b0b1ac]">
            <span className="leading-[22px]">px</span><Tri dim small />
          </div>
        );
      if (n === "GEO")
        return (
          <div key={i} className="my-auto flex h-[25px] w-[142.500px] shrink-0 items-center overflow-hidden rounded-[3px] border border-[#a9aaa5] bg-[#fefffa] pl-[3px] pt-px text-[14.500px] tracking-[0.150px] text-[#7b7c77] whitespace-nowrap">
            MapTiler Geocodi…
          </div>
        );
      const on = n.startsWith("*");
      const name = on ? n.slice(1) : n;
      return (
        <div key={i} className="flex w-[33px] shrink-0 items-center justify-center">
          <div className={on ? "flex h-[31px] w-8 items-center justify-center rounded-[3px] border border-[#b4b5b0] bg-[#dcddd9]" : "contents"}>
            <Svg>{icons[name]}</Svg>
          </div>
        </div>
      );
    })}
  </>
);

/* ---------- small widgets ---------- */

const BTN = "border border-[#a9aaa5] rounded-[3px] bg-gradient-to-b from-[#fbfbf9] to-[#ecede9]";
const FIELD = "border border-[#a9aaa5] rounded-[3px] bg-[#fefffa]";

const Check = ({ on, soft }: { on?: boolean; soft?: boolean }) => (
  <div className={`h-3.5 w-3.5 shrink-0 border bg-[#fefffa] ${soft ? "border-[#bcbdb8]" : "border-[#9fa09b]"}`}>
    {on && <svg viewBox="0 0 12 12" className="h-3 w-3"><path d="M2.500 6l2.500 4.500L10 1.500" fill="none" stroke="#111" strokeWidth="1.800" /></svg>}
  </div>
);
const SpinBtns = ({ upDim }: { upDim?: boolean }) => (
  <div className="flex w-[13px] shrink-0 flex-col items-center justify-center gap-[5px] border-l border-[#a9aaa5] bg-[#f6f6f3]">
    <Tri small up dim={upDim} /><Tri small />
  </div>
);
const DockBtns = () => (
  <div className="flex gap-[3px]">
    <svg viewBox="0 0 12 12" className="h-[11px] w-[11px]" fill="none" stroke="#666761"><rect x=".6" y=".6" width="10.800" height="10.800" rx="2" /><rect x="3" y="5" width="4" height="4" /><path d="M5 5V3h4v4H7" /></svg>
    <svg viewBox="0 0 12 12" className="h-[11px] w-[11px]" fill="none" stroke="#666761"><rect x=".6" y=".6" width="10.800" height="10.800" rx="2" /><path d="M3.500 3.500l5 5M8.500 3.500l-5 5" strokeWidth="1.800" /></svg>
  </div>
);
const Mag = () => (
  <svg viewBox="0 0 14 14" className="h-[13px] w-[13px] shrink-0" fill="none" stroke="#8a8b86" strokeWidth="1.200"><circle cx="5.500" cy="5.500" r="4.700" /><path d="M9 9l4.500 4.500" /></svg>
);
const Brush = ({ className }: { className: string }) => (
  <Svg className={className}>
    <path d="M0 15l6-2 8 6-2 4-9-1z" fill="#d8342b" /><path d="M1 10l5-2 3 6-5 3z" fill="#8fb4dc" /><path d="M7 5l8-1 1 6-6 4-3-3z" fill="#f4dd45" />
    <path d="M7 14l6-5 5 4-4 10c-3-1-6-5-7-9z" fill="#e9b26a" stroke="#b0762c" /><path d="M15 12l8-8" stroke="#c98a3a" strokeWidth="3" />
  </Svg>
);

/* ---------- layers dock ---------- */

type Layer = { name: string; kind: "box" | "line" | "band" | "dot"; c: string; on?: boolean; sel?: boolean };
const layers: Layer[] = [
  { name: "Wards", kind: "box", c: "#b5a78d" },
  { name: "Roads", kind: "band", c: "#b42d35", on: true, sel: true },
  { name: "waterways", kind: "line", c: "#f0dc94" },
  { name: "Transport Network", kind: "line", c: "#cdb3cf" },
  { name: "Places", kind: "box", c: "#bcd850" },
  { name: "Shortest Path 1", kind: "band", c: "#9f77bd" },
  { name: "Shortest Path 2", kind: "line", c: "#f2b59b" },
  { name: "Shortest Path 3", kind: "band", c: "#4a3230" },
  { name: "Shortest Path 4", kind: "line", c: "#f8c98c" },
  { name: "Shortest Path 5", kind: "line", c: "#d5bccb" },
  { name: "Shortest Path 6", kind: "line", c: "#c8b0d6" },
  { name: "Shortest Path 7", kind: "line", c: "#f0d8d6" },
  { name: "Shortest Path 8", kind: "line", c: "#b7d0c0" },
  { name: "Contours", kind: "box", c: "#cfb43a" },
  { name: "Nyanga Tourist", kind: "dot", c: "#8d6a5e", on: true },
  { name: "zwe_admbnda_adm1_zimstat", kind: "box", c: "#82bd70" },
];

const LayerGlyph = ({ l }: { l: Layer }) => (
  <svg viewBox="0 0 16 16" className="h-4 w-4 shrink-0">
    {l.kind === "box" && <rect x=".5" y=".5" width="15" height="15" fill={l.c} stroke="#5a5b50" />}
    {l.kind === "line" && <path d="M0 7.500h16" stroke={l.c} strokeWidth="2" />}
    {l.kind === "band" && (l.name === "Shortest Path 1"
      ? <path d="M0 7.500h14" stroke={l.c} strokeWidth="4" />
      : <g><path d="M0 7.500h14" stroke="#222320" strokeWidth="9.500" /><path d="M0 7.500h14" stroke={l.c} strokeWidth={l.sel ? 7 : 1.5} /></g>)}
    {l.kind === "dot" && <circle cx="8" cy="7.500" r="3.300" fill={l.c} stroke="#5c4038" />}
  </svg>
);

const LayersDock = () => (
  <div className="flex w-[417px] shrink-0 flex-col">
    <div className="flex h-[23px] items-center justify-between pl-[3px] pr-0.5 pb-0.5">
      <span className="text-[14.500px] leading-5">Layers</span><DockBtns />
    </div>
    <div className="flex h-[28px] items-center pl-[3px] pb-1">
      <div className="flex h-[23px] w-6 items-center justify-center rounded-[3px] border border-[#aeafaa] bg-[#dcddd9]"><Brush className="h-4 w-4" /></div>
      <div className="flex w-[25px] justify-center"><Svg className="h-4 w-4"><path d="M2 8v14h14M6 4v14h14V6M6 4h10" stroke="#777" strokeWidth="1.700" /><path d="M13 14V2c0-2 4-2 4 0v10" stroke="#44566a" strokeWidth="1.600" /><path d="M19 15v9M14.500 19.500h9" stroke="#5ea05a" strokeWidth="4" /></Svg></div>
      <div className="flex w-[26px] justify-center"><Svg className="h-4 w-4"><path d="M0 12C5 4 18 4 23 12 18 19 6 19 0 12z" fill="#f3f3f3" stroke="#888" strokeWidth="1.500" /><circle cx="12" cy="11.500" r="5" fill="#5b88b5" /><circle cx="12" cy="11.500" r="2" fill="#1b2c40" /><path d="M17 20h7l-3.500 4z" fill="#555" /></Svg></div>
      <div className="flex w-[25px] justify-center"><Svg className="h-4 w-4"><path d="M1 3h20l-7 10v10l-5-3v-7z" fill="#6f9ac6" stroke="#476f9b" /><path d="M1 0h20v4H1z" fill="#f2e14c" stroke="#b8a62b" strokeWidth=".8" /><path d="M17 20h7l-3.500 4z" fill="#555" /></Svg></div>
      <div className="flex w-[25px] justify-center"><Svg className="h-4 w-4"><path d="M9 1C3-2 0 4 4 6c-6 1-5 9 4 6" stroke="#7d4a86" strokeWidth="2.200" /><path d="M9 12h13l-3 5v6M13 15v8" stroke="#aaa" strokeWidth="3" /></Svg></div>
      <div className="flex w-2.5 justify-center"><Tri small /></div>
      <div className="flex w-[26px] justify-center"><Svg className="h-4 w-4"><path d="M0 2h8M2 2v20h5M3 11h4" stroke="#555" strokeWidth="1.600" /><path d="M5 8h5v5H5zM5 18h5v5H5z" fill="#f3b83d" /><path d="M13 2h6v12h4l-7 9-7-9h4z" fill="#4f80b5" stroke="#274a72" /></Svg></div>
      <div className="flex w-[25px] justify-center"><Svg className="h-4 w-4"><path d="M0 2h8M2 2v20h5M3 11h4" stroke="#555" strokeWidth="1.600" /><path d="M5 8h5v5H5zM5 18h5v5H5z" fill="#f3b83d" /><path d="M13 22h6V11h4l-7-9-7 9h4z" fill="#4f80b5" stroke="#274a72" /></Svg></div>
      <div className="flex w-[25px] justify-center"><Svg className="h-4 w-4"><path d="M2 2h18v17H2z" stroke="#8a8b86" strokeWidth="1.500" fill="#f3f3f0" /><rect x="13" y="16" width="11" height="7" rx="3" fill="#d8333b" /><path d="M15.500 19.500h6" stroke="#fff" strokeWidth="1.800" /></Svg></div>
    </div>
    <div className="flex flex-1 flex-col border-r border-t border-[#b4b5b0] bg-[#fefffa]">
      <div className="flex-1 overflow-hidden">
        {layers.map((l) => (
          <div key={l.name} className={`flex h-[19px] items-center overflow-hidden whitespace-nowrap pl-[23px] text-[14px] font-bold ${l.sel ? "bg-[#388fc1] text-[#fefffa]" : l.on ? "text-black" : "italic text-[#7f807b]"}`}>
            <Check on={l.on} soft />
            <div className="ml-1.5 flex"><LayerGlyph l={l} /></div>
            <span className={`leading-[19px] ${l.sel ? "ml-1 underline underline-offset-2 tracking-[0.200px]" : l.on ? "ml-1.5 tracking-[0.160px]" : l.kind === "band" ? "ml-[5px] tracking-[0.520px]" : "ml-[7px] tracking-[0.520px]"}`}>BrightonWebMap — {l.name}</span>
          </div>
        ))}
      </div>
      <div className="flex h-[15px] border-y border-[#b4b5b0] bg-[#e0e1dd]">
        <div className="flex w-3.5 items-center justify-center border-r border-[#b4b5b0] bg-[#f6f6f3]"><svg viewBox="0 0 5 8" className="h-2 w-[5px]"><path d="M5 0v8L0 4z" fill="#444" /></svg></div>
        <div className="w-[302px] border-r border-[#b4b5b0] bg-gradient-to-b from-[#fbfbf9] to-[#eeeeeb]" />
        <div className="flex-1" />
        <div className="flex w-3.5 items-center justify-center border-l border-[#b4b5b0] bg-[#f6f6f3]"><svg viewBox="0 0 5 8" className="h-2 w-[5px]"><path d="M0 0v8l5-4z" fill="#444" /></svg></div>
      </div>
    </div>
  </div>
);

/* ---------- map canvas ---------- */

const roads: number[][][] = [
  [[904, 303], [899, 309], [897, 320], [899, 333], [904, 344], [913.4, 362], [917, 372], [918.4, 388.5], [914.5, 433], [910.3, 450], [904.5, 463], [895, 475], [865.5, 496.7], [856, 510], [848.5, 533], [840, 560], [829.7, 590], [819.6, 606.7], [766.8, 658], [755, 675], [737, 720], [721, 761], [710, 788], [670, 890], [663.5, 905], [652, 920], [636, 931], [608, 946]],
  [[951, 816], [923, 840], [911, 856], [907.7, 865], [911, 878], [918, 896.7], [926.5, 921.7], [935, 930], [933.5, 946]],
  [[714.5, 783.5], [724, 786], [744, 785.7], [766.8, 775], [772, 767], [785, 740], [792, 727.7], [809, 711], [815, 709], [840, 711.7], [874.7, 724], [893, 717.7], [907, 716], [914.5, 720], [917.4, 727], [915, 743], [917.5, 753], [934, 785], [949, 806]],
  [[1308, 518], [1292.5, 533], [1279.6, 555], [1276, 580], [1272.7, 595], [1269, 598], [1260, 600], [1257, 606.7], [1258, 622], [1255, 639], [1235, 650], [1222, 650.5], [1207.5, 648.5], [1198, 656.7], [1193.8, 670], [1176.8, 689], [1159, 696.500], [1146, 696.5], [1142, 690], [1143.7, 679], [1137, 673], [1125, 669], [1115, 673], [1099.6, 686.7], [1083.6, 690], [1059, 700], [1055, 708], [1050.5, 732], [1003, 766.7], [989.5, 778], [962, 792], [957, 804], [954.500, 808]],
  [[1143, 124], [1133.4, 145], [1122, 157.7], [1108.6, 165.7], [1068, 177.5], [1055, 185], [925, 276], [911, 284.500], [896, 286.5], [873, 297.7], [850, 313.5], [844.5, 320], [824, 350], [816, 357.5], [796.6, 360], [785, 364.5], [742, 358], [735.5, 353], [722, 336.5], [706.7, 325.5], [684, 316], [657, 306.5], [652, 300], [655, 289], [663, 275], [672, 263]],
  [[986, 448.700], [962, 459], [956, 464], [949, 479], [943.5, 486.7], [924, 500.7], [916, 509.5], [898, 515.5], [894, 523], [881.5, 550], [867.8, 585], [845, 621], [839, 627.5], [787.5, 661.7], [764.5, 681.7], [741, 715.500]],
  [[628, 122], [636, 153], [641.7, 176], [639, 186], [627, 204], [625, 214], [627, 223], [633, 230], [660.8, 248], [681, 265], [692, 270], [701, 266.5], [708.6, 258], [718, 245], [728, 237], [743, 230.5], [766, 226], [798.6, 222], [816, 215], [833, 212.5], [861, 216.5], [871, 221.5], [877, 230], [890, 258], [903.500, 291.500]],
];

const smooth = (p: number[][]) => {
  let d = `M${p[0][0]} ${p[0][1]}`;
  for (let i = 0; i < p.length - 1; i++) {
    const a = p[i - 1] ?? p[i], b = p[i], c = p[i + 1], e = p[i + 2] ?? c;
    const len = Math.hypot(c[0] - b[0], c[1] - b[1]);
    const handle = (u: number[], v: number[], m: number[], sign: number) => {
      const l = Math.hypot(v[0] - u[0], v[1] - u[1]) || 1;
      const k = (Math.min(len, 40) / 3.2) * sign;
      return `${(m[0] + ((v[0] - u[0]) / l) * k).toFixed(1)} ${(m[1] + ((v[1] - u[1]) / l) * k).toFixed(1)}`;
    };
    d += `C${handle(a, c, b, 1)} ${handle(b, e, c, -1)} ${c[0]} ${c[1]}`;
  }
  return d;
};

const MapCanvas = () => (
  <div className="mt-px w-[880px] shrink-0 overflow-hidden border border-[#b4b5b0] bg-[#fefffa]">
    <svg viewBox="424 134 878 805" className="block h-[805px] w-[878px]" fill="none">
      {roads.map((r, i) => {
        const d = smooth(r);
        return (
          <g key={i} strokeLinecap="square" strokeLinejoin="round">
            <path d={d} stroke="#23231f" strokeWidth="12" />
            <path d={d} stroke="#b42d35" strokeWidth="9.200" />
          </g>
        );
      })}
      <path d="M924.500 277v17l3.900-3.500 3 6 2.600-1.300-3-5.700h5.300z" fill="#2a2a2a" stroke="#fff" strokeWidth="1" />
    </svg>
  </div>
);

/* ---------- styling dock ---------- */

const Dash = ({ c }: { c: string }) => (
  <svg viewBox="0 0 66 4" className="h-1 w-[66px]"><path d="M2 2h62" stroke={c} strokeWidth="2.800" strokeDasharray="2 8.100" strokeLinecap="round" /></svg>
);
const Paw = ({ x, y, flip }: { x: number; y: number; flip?: boolean }) => (
  <g transform={`translate(${x} ${y}) scale(1 ${flip ? -1 : 1})`} fill="#d0b4d3" stroke="#83308f" strokeWidth="1.400">
    <ellipse cx="-2" cy="-6.500" rx="2.700" ry="3.500" /><ellipse cx="3.800" cy="-5" rx="3.200" ry="2.700" transform="rotate(-20 3.800 -5)" />
    <ellipse cx="7" cy="0.500" rx="3.100" ry="2.600" /><ellipse cx="5" cy="6" rx="3.300" ry="2.600" />
    <path d="M-9.500 0c-.5-3 2-4 5-3.500S1-4 2 0s0 9-4.500 9.500S-8 5-9.500 0z" />
  </g>
);
const symbols = [
  ["cat trail", "#d5c0dc"], ["dash  black", "#141414"], ["dash blue", "#5a86b5"], ["dash gray 1", "#f1f1ec"],
  ["dash gray 2", "#cdcec9"], ["dash gray 3", "#9a9b96"], ["dash gray 4", "#5a5b56"], ["dash green", "#6cb65c"],
];

const SideTab = ({ children, className = "" }: { children: ReactNode; className?: string }) => (
  <div className={`flex h-8 w-[31px] items-center justify-center ${className}`}>{children}</div>
);

const DataDefined = () => (
  <svg viewBox="0 0 24 22" className="h-5 w-[23px]" fill="none">
    <path d="M1 10l6-7v14z" fill="#777" stroke="#555" /><rect x="7" y="1.500" width="11" height="17" fill="#f4f4f1" stroke="#555" strokeWidth="1.300" />
    <path d="M9 6h7M9 10h7M9 14h7" stroke="#555" strokeWidth="1.500" /><path d="M15 15h8l-4 5z" fill="#444" />
  </svg>
);
const ToolBtn = ({ dim, children }: { dim?: boolean; children: ReactNode }) => (
  <div className={`flex h-6 w-7 items-center justify-center rounded-[3px] border ${dim ? "border-[#c6c7c2] bg-[#f0f0ed]" : "border-[#a9aaa5] bg-gradient-to-b from-[#fbfbf9] to-[#ecede9]"}`}>
    <Svg className="h-4 w-4">{children}</Svg>
  </div>
);

const StylingDock = () => (
  <div className="flex w-[615px] shrink-0 flex-col">
    <div className="flex h-[23px] items-center justify-between pl-[9px] pr-px pb-0.5">
      <span className="text-[14.500px] leading-5">Layer Styling</span><DockBtns />
    </div>
    <div className={`ml-2 flex h-[25px] w-[605px] items-center pl-1.5 pr-[7px] text-[14.500px] ${BTN}`}>
      <svg viewBox="0 0 16 16" className="h-4 w-4" fill="none" stroke="#8a8b86"><path d="M1.500 2l5 12 4-11h4" /><circle cx="1.500" cy="1.500" r="1" /><circle cx="14" cy="2.500" r="1" /></svg>
      <span className="ml-[3px] flex-1 pb-0.5 leading-5">BrightonWebMap — Roads</span><Tri small />
    </div>
    <div className="ml-2 mt-1 flex h-[724px]">
      <div className="flex w-[38px] flex-col">
        <div className="flex h-[34px] w-[38px] items-center pl-1.5 pt-0.5"><Brush className="h-[22px] w-[22px]" /></div>
        <div className="flex-1 bg-[#5a5a55]">
          <SideTab><Svg className="h-[22px] w-[22px]"><path d="M1 11l4-6.500h18v13H5z" fill="#f6e64e" stroke="#b3a318" strokeWidth="1.300" /><text x="6" y="14.500" fontSize="9.500" fontWeight="700" fill="#333" fontFamily="Noto Sans" textLength="15">abc</text></Svg></SideTab>
          <SideTab><span className="mb-0.5 rounded-[7px] bg-[#dfe8f1] px-px text-[12px] font-bold leading-[14px] text-[#333]">abc</span></SideTab>
          <SideTab><Svg className="h-[23px] w-[21px]"><path d="M12 1l10 6-10 6L2 7z" fill="#e98c92" stroke="#b3161c" /><path d="M2 7l10 6v11L2 17z" fill="#7fd93b" stroke="#3f9a16" /><path d="M22 7l-10 6v11l10-7z" fill="#f2ea45" stroke="#b3a318" /></Svg></SideTab>
          <SideTab><Svg className="h-[23px] w-[22px]"><rect x="7" y="1" width="9" height="8" fill="#d9423c" stroke="#a3221d" /><path d="M7 3H4v14M18 3h2v14M9 9v9M15 9v9" stroke="#dd9a35" strokeWidth="2" /><rect x="1" y="17" width="9" height="6" fill="#f4de56" /><rect x="14" y="17" width="9" height="6" fill="#7fb2df" /></Svg></SideTab>
          <SideTab><Svg className="h-[22px] w-[22px]"><path d="M2 12C0 5 6 4 9 4V0l6 6-6 5V8c-3 0-4 2-3 5z" fill="#6ba368" /><path d="M20 13c4 6-1 9-5 9v2l-6-5 6-6v4c2 0 3-1 2-4z" fill="#d8733a" /></Svg></SideTab>
        </div>
      </div>
      <div className="ml-[3px] w-[564px] pt-0.5">
        <div className={`flex h-[25px] items-center pl-[7px] pr-[7px] text-[14.500px] ${BTN}`}>
          <svg viewBox="0 0 14 15" className="h-[15px] w-3.5"><path d="M1 1h10v3H1zM3 6h10v3H3zM1 11h10v3H1z" fill="#27a34a" stroke="#156c2c" strokeWidth=".8" /></svg>
          <span className="ml-[3px] flex-1 pb-0.5 leading-5">Single Symbol</span><Tri small />
        </div>
        <div className="mt-1.5 flex h-[124px]">
          <div className="flex w-[125px] items-center pl-[9px] pt-[7px]"><div className="h-3 w-[100px] border-y-[1.500px] border-[#23231f] bg-[#b42d35]" /></div>
          <div className="mt-[5px] w-[371px] border border-[#b4b5b0] bg-[#fefffa] text-[14.500px]">
            <div className="flex h-[19px] items-center bg-[#388fc1] pl-1.5 font-bold text-[#fefffa]"><Tri small /><div className="ml-[10px] h-3 w-4 border-y-2 border-[#23231f] bg-[#b42d35]" /><span className="ml-1.5 text-[14.500px] leading-[19px]">Line</span></div>
            <div className="flex h-[19px] items-center pl-[43px]"><div className="h-2 w-4 bg-[#b42d35]" /><span className="ml-1.5 leading-[19px] tracking-[-0.150px]">Simple Line</span></div>
            <div className="flex h-[19px] items-center pl-[43px]"><div className="h-3 w-4 bg-[#23241f]" /><span className="ml-1.5 leading-[19px] tracking-[-0.150px]">Simple Line</span></div>
          </div>
          <div className="ml-1.5 grid h-20 w-[62px] grid-cols-2 gap-x-1.5 gap-y-1">
            <ToolBtn><path d="M9 2h6v7h7v6h-7v7H9v-7H2V9h7z" fill="#e9f2e6" stroke="#4f9a50" strokeWidth="2" /><path d="M12 5v14M5 12h14" stroke="#4f9a50" /></ToolBtn>
            <ToolBtn dim><path d="M12 3l9 17H3z" fill="#d5d5d5" stroke="#c2c2c2" /></ToolBtn>
            <ToolBtn dim><path d="M2 8h20v8H2z" fill="#f3efec" stroke="#cfc9c9" strokeWidth="1.500" /><path d="M6 12h12" stroke="#d8c4c4" strokeWidth="2" /></ToolBtn>
            <ToolBtn dim><path d="M12 21L3 4h18z" fill="#d5d5d5" stroke="#c2c2c2" /></ToolBtn>
            <ToolBtn dim><path d="M3 5v16h10M7 2h14v16H7z" stroke="#c2c2bd" strokeWidth="1.800" /></ToolBtn>
            <ToolBtn dim><path d="M4 12h16v10H4z" fill="#d9d5cd" stroke="#c6c2ba" /><path d="M8 6c0-5 9-5 9 0v6" stroke="#cfcbc3" strokeWidth="2" /></ToolBtn>
          </div>
        </div>
        <div className="mt-3 h-px bg-[#a3a49f]" />
        <div className="mt-2 flex h-7 items-center">
          <span className="w-[60px] text-[14.500px] leading-[22px] tracking-[-0.100px]">Color</span>
          <div className={`flex h-7 w-[482px] items-center px-1 ${BTN}`}><div className="h-4 w-full rounded-[3px] bg-[#23241f]" /></div>
          <div className={`ml-px flex h-7 w-3 items-center justify-center ${BTN}`}><Tri small /></div>
        </div>
        <div className="mt-[7px] flex h-6 items-center text-[14.500px]">
          <span className="w-[61px] leading-[22px] tracking-[-0.150px]">Opacity</span>
          <div className="flex w-[354px] items-center"><div className="h-[6px] w-[342px] rounded-l-[3px] border border-[#2c76a5] bg-[#4aa0d2]" /><div className="-ml-px h-3.5 w-[13px] rounded-[3px] border border-[#a9aaa5] bg-[#fbfbf9]" /></div>
          <div className={`ml-1 flex h-6 w-[100px] ${FIELD}`}><span className="flex-1 pl-[5px] leading-5 tracking-[-0.250px]">100,0 %</span><SpinBtns upDim /></div>
          <div className="ml-[9px]"><DataDefined /></div>
        </div>
        <div className="mt-[7px] flex h-[25px] items-center text-[14.500px]">
          <span className="w-[60px] leading-[22px] tracking-[-0.150px]">Width</span>
          <div className={`flex h-6 w-[227px] ${FIELD}`}><span className="flex-1 pl-[5px] leading-[22px] tracking-[-0.200px]">3,06000</span><SpinBtns /></div>
          <div className={`ml-1.5 flex h-[25px] w-[226px] items-center pl-[5px] pr-[6px] ${BTN}`}><span className="flex-1 pb-0.5 leading-5 tracking-[-0.250px]">Millimeters</span><Tri small /></div>
          <div className="ml-[9px]"><DataDefined /></div>
        </div>
        <div className="mt-[5px] h-px w-[555px] bg-[#a3a49f]" />
        <div className="mt-1.5 flex h-[25px] items-center">
          <div className={`flex h-[25px] w-[525px] items-center pl-[10px] ${FIELD}`}>
            <Mag /><span className="ml-1.5 flex-1 pb-0.5 text-[14.500px] leading-5">All Symbols</span>
            <svg viewBox="0 0 14 11" className="mr-[9px] h-[11px] w-3.5"><path d="M4 0h10v11H4L0 5.500z" fill="#8e8f8a" /><path d="M6 3l5 5M11 3L6 8" stroke="#fff" strokeWidth="1.200" /></svg>
            <div className="flex h-full w-5 items-center justify-center border-l border-[#a9aaa5] bg-[#f4f4f1]"><Tri small /></div>
          </div>
          <div className="ml-[10px]"><Svg className="h-4 w-4"><circle cx="6" cy="5" r="4.500" fill="#d8633a" /><path d="M14 10l7-8" stroke="#5a86b5" strokeWidth="3" /><rect x="1" y="13" width="9" height="9" fill="#8fb684" /><text x="14" y="22" fontSize="12" fill="#444" fontFamily="Noto Sans">a</text></Svg></div>
        </div>
        <div className="mt-1 flex h-[312px] w-[555px] border border-[#b4b5b0] bg-[#fefffa]">
          <div className="flex-1 overflow-hidden">
            <div className="grid grid-cols-[repeat(4,125px)] auto-rows-[137px]">
              {symbols.map(([n, c], i) => (
                <div key={n} className="flex flex-col items-center">
                  <div className="flex h-[84px] items-center">
                    {i === 0 ? (
                      <svg viewBox="0 0 100 80" className="h-20 w-[100px]">
                        <path d="M18 40.500h60" stroke="#cdb8d8" strokeWidth="1.500" strokeDasharray="4 5.400" />
                        <Paw x={18} y={24} /><Paw x={60} y={24} /><Paw x={37} y={56.5} flip /><Paw x={79} y={56.5} flip />
                      </svg>
                    ) : <Dash c={c} />}
                  </div>
                  <span className="mt-px whitespace-pre text-[12px] leading-[14px] tracking-[-0.100px]">{n}</span>
                </div>
              ))}
              <div />
              <div className="flex justify-center pt-[34px]"><div className="h-3 w-[72px] rounded-[5px] bg-[#1d1314]" /></div>
              <div className="flex justify-center pt-[35px]"><div className="h-3 w-[70px] rounded-[5px] bg-[#f4989c] shadow-[0_0_4px_3px_#f9c6c8]" /></div>
            </div>
          </div>
          <div className="flex w-[15px] flex-col border-l border-[#b4b5b0] bg-[#e0e1dd]">
            <div className="flex h-3.5 items-center justify-center border-b border-[#b4b5b0] bg-[#f6f6f3]"><Tri small up /></div>
            <div className="h-[72px] border-b border-[#b4b5b0] bg-gradient-to-r from-[#fbfbf9] to-[#eeeeeb]" />
            <div className="flex-1" />
            <div className="flex h-3.5 items-center justify-center border-t border-[#b4b5b0] bg-[#f6f6f3]"><Tri small /></div>
          </div>
        </div>
        <div className="mt-[7px] flex h-[25px] w-[555px] items-center text-[14.500px]">
          <div className="flex h-[23px] w-6 items-center justify-center rounded-[3px] border border-[#a9aaa5] bg-[#dcddd9]">
            <svg viewBox="0 0 14 14" className="h-3.5 w-3.5"><rect width="14" height="14" rx="1" fill="#a9c6e3" /><path d="M1.500 3h11M1.500 7h11M1.500 11h11" stroke="#4f80b5" strokeWidth="2" strokeDasharray="2.500 1.500" /></svg>
          </div>
          <svg viewBox="0 0 14 14" className="ml-[5px] h-3.5 w-3.5"><rect x=".5" y=".5" width="13" height="13" rx="1" fill="#e8f0f8" stroke="#9ebcdb" /><path d="M1 3h12" stroke="#6b98c5" strokeWidth="3" /><path d="M2 7h10M2 9.500h10M2 12h10M5 5v8" stroke="#9ebcdb" /></svg>
          <div className="flex-1" />
          <div className={`flex h-[25px] w-[108px] items-center justify-center ${BTN}`}><span className="pb-0.5 leading-5 tracking-[0px]">Save Symbol…</span></div>
          <div className={`ml-1.5 flex h-[25px] w-[87px] items-center justify-center gap-[5px] ${BTN}`}><span className="pb-0.5 leading-5 tracking-[-0.350px]">Advanced</span><svg viewBox="0 0 6 4" className="h-1 w-1.5"><path d="M0 0h6L3 4z" fill="#55564f" /></svg></div>
        </div>
        <div className="mt-[19px] flex h-[22px] items-center pl-[5px]">
          <svg viewBox="0 0 7 11" className="h-[11px] w-[7px]"><path d="M0 0v11l7-5.500z" fill="#333" /></svg>
          <span className="ml-[10px] text-[14.500px] font-bold leading-[22px] tracking-[-0.130px]">Layer Rendering</span>
        </div>
        <div className="mt-[3px] flex h-[25px] items-center text-[14.500px]">
          <div className={`flex h-[23px] w-6 items-center justify-center ${BTN}`}><Svg className="h-3.5 w-3.5"><path d="M1 10l9-9v5c9 0 12 5 12 9s-3 7-6 8c1-3 1-8-6-8v5z" fill="#d8733a" stroke="#a8501f" /></Svg></div>
          <div className={`ml-1.5 flex h-[23px] w-6 items-center justify-center ${BTN}`}><Svg className="h-3.5 w-3.5"><path d="M23 10l-9-9v5C5 6 2 11 2 15s3 7 6 8c-1-3-1-8 6-8v5z" fill="#8bbd7c" stroke="#5b9450" /></Svg></div>
          <div className="flex-1" />
          <Check on /><span className="ml-[5px] w-[92px] leading-[22px] tracking-[-0.100px]">Live update</span>
          <div className={`flex h-[25px] w-20 items-center justify-center gap-px ${BTN}`}>
            <svg viewBox="0 0 16 16" className="h-4 w-4"><circle cx="8" cy="8" r="8" fill="#1f9a2c" /><path d="M4.500 8l2.500 3 4.500-5" fill="none" stroke="#fff" strokeWidth="1.500" /></svg>
            <span className="leading-[22px]">Apply</span>
          </div>
        </div>
      </div>
    </div>
    <div className="mt-1 flex h-7 text-[14.500px]">
      <div className="ml-[5px] flex h-[27px] w-[112px] items-center justify-center rounded-b-[3px] border border-t-0 border-[#b4b5b0] bg-gradient-to-b from-[#eeeeea] to-[#f8f8f6]"><span className="leading-[22px]">Layer Styling</span></div>
      <div className="flex flex-1 border-t border-[#b4b5b0]">
        <div className="flex h-6 w-[81px] items-center justify-center rounded-br-[3px] border border-l-0 border-t-0 border-[#b4b5b0] bg-[#dcddd9]"><span className="pb-0.5 leading-5 tracking-[0.100px]">Browser</span></div>
      </div>
    </div>
  </div>
);

/* ---------- status bar ---------- */

const StatusBar = () => (
  <div className="flex h-[30px] shrink-0 items-center pt-px text-[12.500px] whitespace-nowrap">
    <div className={`ml-[3px] flex h-[25px] w-[268px] items-center pl-2 ${FIELD}`}><Mag /><span className="ml-[7px] pb-0.5 text-[14.500px] leading-5 text-[#7b7c77]">Type to locate (Ctrl+K)</span></div>
    <span className="ml-[755px] w-16 tracking-[-0.300px]">Coordinate</span>
    <div className={`flex h-6 w-[110px] items-center justify-center tracking-[-0.300px] ${FIELD}`}>469596 7973592</div>
    <Svg className="ml-[3px] h-4 w-4"><path d="M4 2l5 0 10 12-3 8-6-2L3 8z" fill="#cfcfca" stroke="#444" strokeWidth="1.500" /><path d="M3 2l17 19M9 2l10 14M4 9l11 11M5 14l14-9" stroke="#444" strokeWidth="1.500" /></Svg>
    <span className="ml-3.5 w-8 tracking-[-0.300px]">Scale</span>
    <div className={`flex h-[25px] w-[97px] items-center ${FIELD}`}><span className="flex-1 pl-[3px] tracking-[-0.200px]">1:13727</span><div className="flex h-full w-5 items-center justify-center border-l border-[#a9aaa5] bg-[#f6f6f3]"><Tri small /></div></div>
    <svg viewBox="0 0 14 16" className="ml-[11px] h-4 w-3.5"><path d="M4 8V5c0-5 6-5 6 0v3" fill="none" stroke="#8a8b86" strokeWidth="1.600" /><rect x="1.500" y="7" width="11" height="8.500" rx="1" fill="#55564f" /></svg>
    <span className="ml-2 w-14 tracking-[-0.350px]">Magnifier</span>
    <div className={`flex h-6 w-[98px] ${FIELD}`}><span className="flex-1 pl-1 leading-[22px] tracking-[-0.300px]">100%</span><SpinBtns /></div>
    <span className="ml-[9px] w-[57px] tracking-[-0.300px]">Rotation</span>
    <div className={`flex h-6 w-[94px] ${FIELD}`}><span className="flex-1 pl-1 leading-[22px] tracking-[-0.300px]">0,0 °</span><SpinBtns /></div>
    <div className="ml-1.5 pb-0.5"><Check on /></div><span className="ml-[5px] w-14 pb-px tracking-[-0.300px]">Render</span>
    <svg viewBox="0 0 16 16" className="h-[15px] w-[15px]" fill="#77786f"><circle cx="8" cy="8" r="7" /><path d="M8 1v14M1 8h14M2.500 4.500h11M2.500 11.500h11M8 1C3.500 5 3.500 11 8 15M8 1c4.500 4 4.500 10 0 14" fill="none" stroke="#c4c4c0" strokeWidth=".8" /></svg>
    <span className="ml-[2px] w-[89px] tracking-[-0.450px]">EPSG:32736</span>
    <svg viewBox="0 0 16 15" className="h-[15px] w-4"><path d="M8 0c5 0 8 3 8 6.500S14 12 13 12.500l1 2.500-4-2C4 14 0 11 0 6.500S3 0 8 0z" fill="#55564f" /><circle cx="4.500" cy="6.500" r="1.200" fill="#fff" /><circle cx="8" cy="6.500" r="1.200" fill="#fff" /><circle cx="11.500" cy="6.500" r="1.200" fill="#fff" /></svg>
  </div>
);

const Grip = ({ className }: { className: string }) => (
  <div className={`flex shrink-0 items-center justify-center ${className}`}>
    <svg viewBox="0 0 2 18" className="h-[18px] w-0.5"><path d="M1 0v18" stroke="#b3b4af" strokeDasharray="1 2" /></svg>
  </div>
);

export default function App() {
  return (
    <div className="flex h-[970px] w-[1918px] flex-col overflow-hidden bg-[#edeeea] font-['Noto_Sans',sans-serif] text-[#111]">
      <div className="flex h-4 shrink-0 items-end overflow-hidden border-b border-[#b4b5b0] bg-[#f0f0ed]">
        <div className="flex h-[38px] shrink-0">
          <Cells items="^ page folder disk layout layoutEdit styleMgr | hand pan *zoom zoom zoomB zoomG zoomO zoomG zoomPrev zoomNext mapNew map3d bookmark scroll clock refresh | identify abacus gear sigma table v ruler v tips actionsG" />
        </div>
      </div>
      <Bar items="^ addLayer pkg vnew feather chip mesh vgrid | pencils pencil diskG vstarG vertexG d formG trashG cut copy paste undoG redoG | tagY diagram / tagPin tagR / tagPinG tagEye tagMove tagRot tagEdit | globeP globeS globeB | python cube v swatches earth | help | | layers" />
      <Bar items="^ setSq arcG d vArrow d bRot bSwap bHex bRing bPart bFill bRingX bPartX bShape bCurve vRefresh trim scis scis2 merge align rotG d | magnet vG *dotsG SPIN COMBO trace blobs crossG boltG d selfG | selRect v selForm v desel v selPin" />
      <Bar className="h-[38px]" items="^ gridPen gridSel d gridE gridN d | textA v cursorSel polyP lineP starP textP / textBub v | searchG osm | share | GEO | slashes | nib rectO rectI wandR wand bookR nibR |" />
      <div className="flex h-[808px] shrink-0">
        <LayersDock />
        <Grip className="w-1.5" />
        <MapCanvas />
        <StylingDock />
      </div>
      <StatusBar />
    </div>
  );
}
